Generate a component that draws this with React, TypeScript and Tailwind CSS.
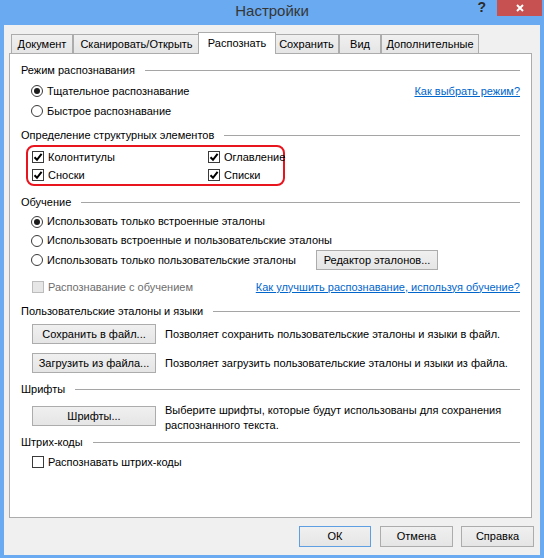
import React from "react";

function Header({ label, className = "" }: { label: string; className?: string }) {
  return (
    <div className={"flex items-center " + className}>
      <span className="whitespace-nowrap">{label}</span>
      <div className="flex-1 h-px bg-[#a5a5a5] ml-[10px]" />
    </div>
  );
}

function Radio({ checked, label }: { checked?: boolean; label: string }) {
  return (
    <div className="flex items-center">
      <span className="w-[12px] h-[12px] rounded-full border border-[#3a3a3a] bg-white flex items-center justify-center shrink-0">
        {checked && <span className="w-[6px] h-[6px] rounded-full bg-[#1b1b1b]" />}
      </span>
      <span className="ml-[4px] whitespace-nowrap">{label}</span>
    </div>
  );
}

function Check({ checked, label, disabled }: { checked?: boolean; label: string; disabled?: boolean }) {
  return (
    <div className="flex items-center">
      <span
        className={
          disabled
            ? "w-[12px] h-[12px] border border-[#bcbcbc] bg-[#e6e6e6] shrink-0"
            : "w-[12px] h-[12px] border border-[#3a3a3a] bg-white shrink-0 flex items-center justify-center"
        }
      >
        {checked && (
          <svg width="10" height="10" viewBox="0 0 10 10">
            <path d="M1.5 5.2 L4 7.8 L8.6 1.8" stroke="#000" strokeWidth="2" fill="none" />
          </svg>
        )}
      </span>
      <span className={"ml-[4px] whitespace-nowrap " + (disabled ? "text-[#6d6d6d]" : "")}>{label}</span>
    </div>
  );
}

function Btn({ label, w, def }: { label: string; w: string; def?: boolean }) {
  return (
    <div
      className={
        "flex items-center justify-center shrink-0 border bg-linear-to-b from-[#f0f0f0] to-[#e5e5e5] whitespace-nowrap " +
        w +
        (def ? " border-[#5e9fe3]" : " border-[#acacac]")
      }
    >
      {label}
    </div>
  );
}

function Tab({ label, w, active }: { label: string; w: string; active?: boolean }) {
  if (active) {
    return (
      <div
        className={
          "h-[22px] -mb-px -mx-[2px] relative z-10 bg-white border-x border-t border-[#acacac] flex items-center justify-center " +
          w
        }
      >
        {label}
      </div>
    );
  }
  return (
    <div
      className={
        "h-[19px] pt-[1px] border-x border-t border-[#acacac] bg-linear-to-b from-[#f0f0f0] to-[#e5e5e5] flex items-center justify-center " +
        w
      }
    >
      {label}
    </div>
  );
}

export default function App() {
  return (
    <div className="w-[544px] h-[558px] bg-[#69aaf0] flex flex-col font-['Liberation_Sans',Arial,sans-serif] text-[11px] text-black overflow-hidden">
      {/* title bar */}
      <div className="h-[25px] relative flex items-center justify-center shrink-0">
        <span className="text-[15px] text-[#363636] pb-[2px]">Настройки</span>
        <div className="absolute right-[2px] top-0 flex items-start">
          <span className="text-[14px] font-bold text-[#2b2b2b] leading-none mt-[0px] mr-[11px]">?</span>
          <div className="w-[45px] h-[16px] bg-[#c75050] flex items-center justify-center">
            <svg width="8" height="8" viewBox="0 0 8 8">
              <path d="M1 1 L7 7 M7 1 L1 7" stroke="#fff" strokeWidth="2" />
            </svg>
          </div>
        </div>
      </div>

      {/* client */}
      <div className="flex-1 ml-[4px] mr-[4px] mb-[3px] bg-[#f0f0f0] flex flex-col pl-[5px] pr-[8px]">
        {/* tabs */}
        <div className="h-[21px] mt-[7px] flex items-end pl-[2px] shrink-0">
          <Tab label="Документ" w="w-[62px]" />
          <Tab label="Сканировать/Открыть" w="w-[127px]" />
          <Tab label="Распознать" w="w-[78px]" active />
          <Tab label="Сохранить" w="w-[65px]" />
          <Tab label="Вид" w="w-[42px]" />
          <Tab label="Дополнительные" w="w-[98px]" />
        </div>

        {/* panel */}
        <div className="bg-white border border-[#acacac] h-[465px] px-[11px] pt-[6px] flex flex-col shrink-0">
          <Header label="Режим распознавания" className="h-[21px]" />
          <div className="h-[20px] flex items-center justify-between pl-[10px]">
            <Radio checked label="Тщательное распознавание" />
            <span className="text-[#0066cc] underline">Как выбрать режим?</span>
          </div>
          <div className="h-[20px] flex items-center pl-[10px]">
            <Radio label="Быстрое распознавание" />
          </div>

          <Header label="Определение структурных элементов" className="h-[20px] mt-[4px]" />
          <div className="ml-[5px] w-[259px] h-[41px] border-2 border-[#e8141e] rounded-[8px] pl-[4px] pt-px grid grid-cols-[176px_1fr] grid-rows-[18px_18px]">
            <Check checked label="Колонтитулы" />
            <Check checked label="Оглавление" />
            <Check checked label="Сноски" />
            <Check checked label="Списки" />
          </div>

          <Header label="Обучение" className="h-[20px] mt-[6px]" />
          <div className="h-[19px] flex items-center pl-[10px]">
            <Radio checked label="Использовать только встроенные эталоны" />
          </div>
          <div className="h-[19px] flex items-center pl-[10px]">
            <Radio label="Использовать встроенные и пользовательские эталоны" />
          </div>
          <div className="h-[20px] flex items-center pl-[10px]">
            <div className="w-[285px] shrink-0">
              <Radio label="Использовать только пользовательские эталоны" />
            </div>
            <Btn label="Редактор эталонов..." w="w-[122px] h-[20px]" />
          </div>
          <div className="h-[20px] mt-[7px] flex items-center justify-between pl-[11px]">
            <Check disabled label="Распознавание с обучением" />
            <span className="text-[#0066cc] underline">Как улучшить распознавание, используя обучение?</span>
          </div>

          <Header label="Пользовательские эталоны и языки" className="h-[20px] mt-[4px]" />
          <div className="h-[20px] mt-[3px] flex items-center pl-[11px]">
            <Btn label="Сохранить в файл..." w="w-[124px] h-[20px]" />
            <span className="ml-[9px] whitespace-nowrap">Позволяет сохранить пользовательские эталоны и языки в файл.</span>
          </div>
          <div className="h-[20px] mt-[9px] flex items-center pl-[11px]">
            <Btn label="Загрузить из файла..." w="w-[124px] h-[20px]" />
            <span className="ml-[9px] whitespace-nowrap">Позволяет загрузить пользовательские эталоны и языки из файла.</span>
          </div>

          <Header label="Шрифты" className="h-[20px] mt-[6px]" />
          <div className="h-[20px] mt-[7px] flex items-start pl-[11px]">
            <Btn label="Шрифты..." w="w-[124px] h-[20px]" />
            <span className="ml-[9px] -mt-[3px] leading-[15px] whitespace-nowrap">
              Выберите шрифты, которые будут использованы для сохранения
              <br />
              распознанного текста.
            </span>
          </div>

          <Header label="Штрих-коды" className="h-[20px] mt-[6px]" />
          <div className="h-[20px] flex items-center pl-[11px]">
            <Check label="Распознавать штрих-коды" />
          </div>
        </div>

        {/* bottom buttons */}
        <div className="mt-[8px] h-[21px] flex justify-end gap-[8px] pr-[-2px] shrink-0">
          <Btn label="ОК" w="w-[72px] h-[21px] mr-[1px]" def />
          <Btn label="Отмена" w="w-[73px] h-[21px]" />
          <Btn label="Справка" w="w-[73px] h-[21px] -mr-[2px]" />
        </div>
      </div>
    </div>
  );
}
